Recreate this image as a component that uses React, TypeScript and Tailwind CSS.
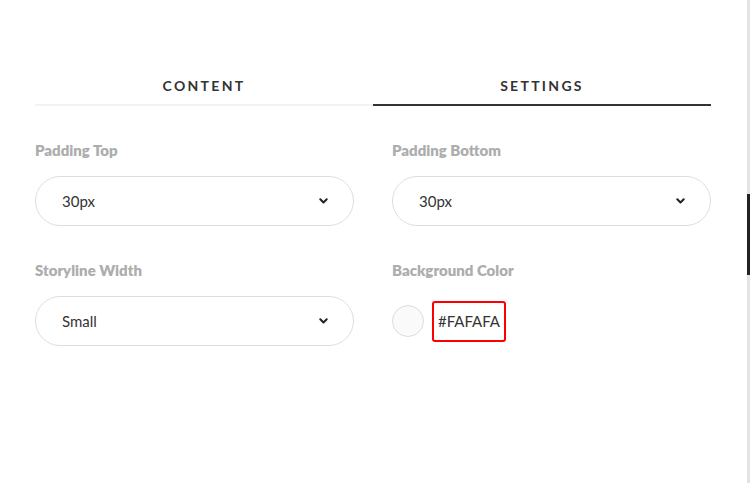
import { useState } from "react";

function Chevron() {
  return (
    <svg width="9" height="6" viewBox="0 0 9 6" className="shrink-0">
      <path d="M1.3 1.3 L4.5 4.5 L7.7 1.3" fill="none" stroke="#222" strokeWidth="2" strokeLinecap="round" strokeLinejoin="round" />
    </svg>
  );
}

function SelectBox({ value }: { value: string }) {
  return (
    <div className="h-[50px] rounded-full border border-[#dedede] bg-white flex items-center justify-between pl-[26px] pr-[25px]">
      <span className="text-[15px] text-[#333]">{value}</span>
      <Chevron />
    </div>
  );
}

function Label({ children }: { children: string }) {
  return <div className="text-[15px] font-extrabold text-[#adadad] leading-[20px] mb-[16px]">{children}</div>;
}

export default function App() {
  const [tab, setTab] = useState("settings");

  return (
    <div className="relative w-[750px] h-[483px] bg-white overflow-hidden" style={{ fontFamily: "Lato, 'Noto Sans', sans-serif" }}>
      <div className="px-[35px] pr-[39px] pt-[74px]">
        <div className="flex">
          {["content", "settings"].map((t) => (
            <button
              key={t}
              onClick={() => setTab(t)}
              className={`flex-1 text-center text-[14px] font-bold uppercase tracking-[2.3px] leading-[24px] pb-[6px] border-b-2 text-[#333] ${
                tab === t ? "border-[#333]" : "border-[#f2f2f2]"
              }`}
            >
              {t}
            </button>
          ))}
        </div>

        <div className="grid grid-cols-2 gap-x-[38px] pt-[34px]">
          <div>
            <Label>Padding Top</Label>
            <SelectBox value="30px" />
          </div>
          <div>
            <Label>Padding Bottom</Label>
            <SelectBox value="30px" />
          </div>
          <div className="mt-[34px]">
            <Label>Storyline Width</Label>
            <SelectBox value="Small" />
          </div>
          <div className="mt-[34px]">
            <Label>Background Color</Label>
            <div className="h-[50px] flex items-center gap-[8px]">
              <div className="w-[32px] h-[32px] rounded-full border border-[#dcdcdc] bg-[#fafafa]" />
              <div className="h-[41px] px-[4px] flex items-center border-2 border-[#ff0000] rounded-[3px] text-[15px] text-[#333]">
                #FAFAFA
              </div>
            </div>
          </div>
        </div>
      </div>

      <div className="absolute top-0 right-0 w-[3px] h-full bg-[#e3e3e3]">
        <div className="mt-[194px] h-[81px] bg-[#222]" />
      </div>
    </div>
  );
}
